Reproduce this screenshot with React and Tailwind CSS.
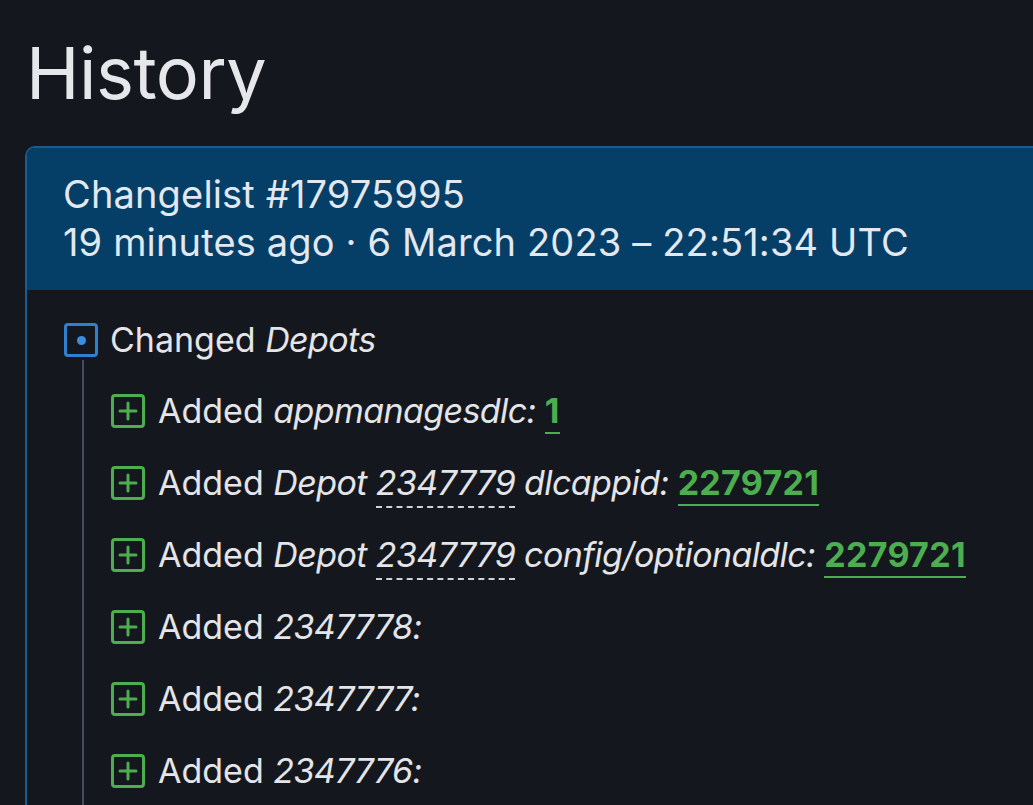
import React from 'react';

const GREEN = '#4cae4f';

const PlusIcon = () => (
  <span className="inline-flex items-center justify-center w-[34px] h-[34px] rounded-[4px] border-[3px] border-[#4cae4f] shrink-0">
    <svg width="20" height="20" viewBox="0 0 20 20">
      <path d="M10 2v16M2 10h16" stroke={GREEN} strokeWidth="3" strokeLinecap="round" />
    </svg>
  </span>
);

const DotIcon = () => (
  <span className="inline-flex items-center justify-center w-[34px] h-[34px] rounded-[4px] border-[3px] border-[#2f81d0] shrink-0 bg-[#15171e]">
    <span className="w-[9px] h-[9px] rounded-full bg-[#3a8ee0]" />
  </span>
);

const Dashed = ({ children }) => (
  <span className="border-b-2 border-dashed border-[#cfd2d8] pb-[3px]">{children}</span>
);

const Link = ({ children }) => (
  <span className="font-bold not-italic tracking-[0.3px] text-[#4cae4f] border-b-2 border-[#4cae4f] pb-[1px]">{children}</span>
);

const It = ({ children }) => <i className="tracking-[-0.6px]">{children}</i>;

const rows = [
  <>Added <It>appmanagesdlc: </It><Link>1</Link></>,
  <>Added <It>Depot <Dashed>2347779</Dashed> dlcappid: </It><Link>2279721</Link></>,
  <>Added <It>Depot <Dashed>2347779</Dashed> config/optionaldlc: </It><Link>2279721</Link></>,
  <>Added <It>2347778:</It></>,
  <>Added <It>2347777:</It></>,
  <>Added <It>2347776:</It></>,
  <>Added <It>2347775:</It></>,
];

export default function App() {
  return (
    <div className="w-[1033px] h-[805px] overflow-hidden bg-[#15171e] text-[#e4e5e8] font-['Inter',sans-serif]">
      <h1 className="pl-[26px] pt-[30px] text-[72px] leading-[86px] tracking-[-0.5px] text-[#e6e7ea]">History</h1>
      <div className="ml-[25px] mt-[30px] w-[1100px] rounded-tl-[10px] border-l-2 border-t-2 border-[#1b5b8f]">
        <div className="bg-[#053e66] pl-[36px] pt-[22px] pb-[24px] rounded-tl-[8px] text-[38px] leading-[48px] tracking-[0.15px] text-[#e2e8ee]">
          <div>Changelist #17975995</div>
          <div>19 minutes ago · 6 March 2023 – 22:51:34 UTC</div>
        </div>
        <div className="pl-[37px] pt-[30px] text-[34px] leading-[40px]">
          <div className="flex items-center gap-[12px]">
            <DotIcon />
            <span>Changed <It>Depots</It></span>
          </div>
          <div className="ml-[18px] border-l-2 border-[#474b63] pl-[27px] pt-[15px]">
            {rows.map((r, i) => (
              <div key={i} className="flex items-center gap-[13px] h-[72px]">
                <PlusIcon />
                <span className="whitespace-nowrap">{r}</span>
              </div>
            ))}
          </div>
        </div>
      </div>
    </div>
  );
}
